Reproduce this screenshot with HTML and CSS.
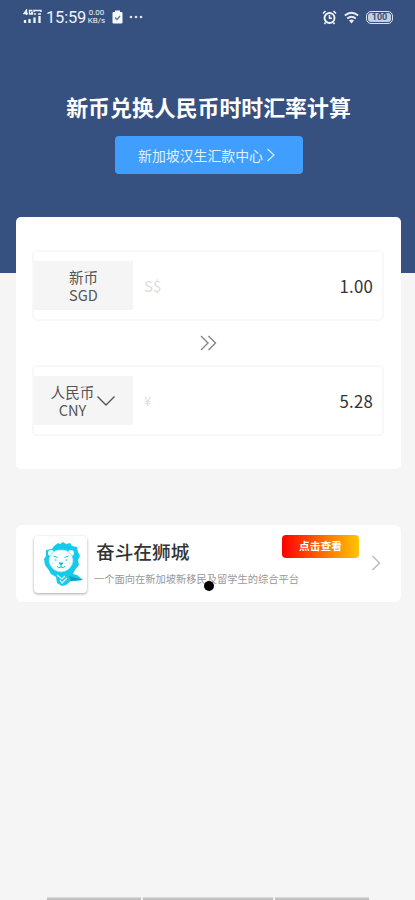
FILE: index.html
```html
<!DOCTYPE html>
<html lang="zh-CN">
<head>
<meta charset="utf-8">
<meta name="viewport" content="width=device-width">
<title>汇率计算</title>
<link rel="stylesheet" href="styles.css">
</head>
<body>
<header class="hero">
  <div class="status">
    <svg class="signal" width="19" height="16" viewBox="0 0 19 16" fill="none" stroke="#eef3fa">
      <path stroke-width="1.3" d="M3.500 6V1L1 4.500h4M9.500 1.500H6.500v3.500h3V3.500H8"/>
      <path stroke-width="1.400" d="M11 3V1.500h7V3M11 5h2M15 5h3"/>
      <path stroke-width="2.300" d="M2 14v-3M6.500 14v-4M11.500 14V8.500M16.500 14V7"/>
    </svg>
    <span class="clock">15:59</span>
    <span class="speed"><span>0.00</span><span>KB/s</span></span>
    <svg class="clip" width="11" height="14" viewBox="0 0 11 14">
      <path fill="#f5f8fc" d="M1.500 2H3V.5h5V2h1.500q1 0 1 1v9.500q0 1-1 1h-8q-1 0-1-1V3q0-1 1-1z"/>
      <path d="M3 7.500l2 2 3-3.500" fill="none" stroke="#5774a3" stroke-width="1.300"/>
    </svg>
    <svg class="dots" width="14" height="4" viewBox="0 0 14 4" fill="#dfe7f3"><circle cx="2" cy="2" r="1.300"/><circle cx="7" cy="2" r="1.300"/><circle cx="12" cy="2" r="1.300"/></svg>
    <svg class="alarm" width="15" height="15" viewBox="0 0 15 15" fill="none" stroke="#f2f6fb" stroke-width="1.900">
      <circle cx="7.500" cy="8" r="5"/><path d="M1 3.500L3.500 1M14 3.500L11.500 1M7.500 5v3.300h2.500M3.500 12.500L2.500 14M11.500 12.500l1 1.500" stroke-width="1.500"/>
    </svg>
    <svg class="wifi" width="15" height="13" viewBox="0 0 15 13" fill="none" stroke="#e8eef7" stroke-width="1.800">
      <path d="M.8 4.500Q7.500-1 14.200 4.500M3.200 7.500Q7.500 4 11.800 7.500"/><path d="M5 9.500q2.500-2 5 0L7.500 12.500z" fill="#e8eef7" stroke="none"/>
    </svg>
    <span class="battery"><span>100</span></span>
  </div>
  <h1>新币兑换人民币时时汇率计算</h1>
  <a class="center-link">新加坡汉生汇款中心<svg width="9" height="14" viewBox="0 0 9 14" fill="none" stroke="#d5eaff" stroke-width="1.200"><path d="M1.500 1L8 7l-6.500 6"/></svg></a>
</header>
<main>
  <section class="converter">
    <div class="row">
      <div class="currency"><div class="names"><span>新币</span><span>SGD</span></div></div>
      <span class="symbol">S$</span>
      <span class="amount">1.00</span>
    </div>
    <div class="arrows"><svg width="17" height="16" viewBox="0 0 17 16" fill="none" stroke="#858585" stroke-width="1.400"><path d="M1 1l7 7-7 7M8.500 1l7 7-7 7"/></svg></div>
    <div class="row">
      <div class="currency"><div class="names"><span>人民币</span><span>CNY</span></div><svg width="20" height="12" viewBox="0 0 20 12" fill="none" stroke="#555" stroke-width="1.400"><path d="M1.500 1.500L10 10l8.500-8.500"/></svg></div>
      <span class="symbol yen">¥</span>
      <span class="amount">5.28</span>
    </div>
  </section>
  <section class="promo">
    <div class="logo">
      <svg width="42" height="46" viewBox="0 0 42 46">
        <path fill="#16cbea" d="M11 4l4-3 2 1 3-2 3 2 4-1 2 3 5 1 1 5 2 4-2 4 1 5-4 5-2 4 4 1 6 5-12 1-5 4-4 1-5-3-1-6-5-3-3-5-3-4-1-6 2-3 0-6 6-1z"/>
        <circle cx="8" cy="11" r="3" fill="#f5ffff"/><circle cx="28" cy="11" r="3" fill="#f5ffff"/>
        <path fill="#f8ffff" stroke="#5fd9ec" stroke-width=".6" d="M9 11q4-4 9-3 5-1 9 3 5 6 2 12-4 7-11 7-7 0-11-7-3-6 2-12z"/>
        <g fill="none" stroke="#16bedd"><path d="M10.500 14l4 1.500M25.500 14l-4 1.500M11.500 18h2M22.500 18h2M18 22v3M14 24q1 3 4 1 3 2 4-1"/><path d="M16 21h4l-2 2z" fill="#16bedd"/><path d="M9 21h1M26 21h1" stroke="#90e4f1"/></g>
        <path d="M14 33l5 4 3-3M17 38l2 3 5-5" fill="none" stroke="#dcfaff" stroke-width="1.200"/>
        <path d="M26 34l7 2 7 2-12 1z" fill="#139bc1"/>
      </svg>
    </div>
    <div class="copy"><h2>奋斗在狮城</h2><p>一个面向在新加坡新移民及留学生的综合平台</p></div>
    <span class="badge">点击查看</span>
    <svg class="next" width="10" height="16" viewBox="0 0 10 16" fill="none" stroke="#bdbdbd" stroke-width="1.500"><path d="M1.500 1l7 7-7 7"/></svg>
    <span class="pointer"></span>
  </section>
</main>
<footer class="tabs"><span></span><span></span><span></span></footer>
</body>
</html>
```

FILE: styles.css
```css
* { box-sizing: border-box; }
body {
  margin: 0;
  height: 900px;
  overflow: hidden;
  display: flex;
  flex-direction: column;
  background: #f5f5f5;
  font-family: "Noto Sans CJK SC", sans-serif;
}
svg { flex: none; display: block; }
.hero {
  height: 273px;
  flex: none;
  background: #36517f;
  display: flex;
  flex-direction: column;
  align-items: center;
}
.status {
  width: 100%;
  height: 34px;
  padding: 0 22px 0 23px;
  display: flex;
  align-items: center;
  color: #eef3fa;
  font-family: Roboto, sans-serif;
}
.clock { width: 41px; margin: 1px 0 0 4px; font-size: 16.500px; line-height: 20px; white-space: nowrap; letter-spacing: -.2px; }
.speed { width: 19px; display: flex; flex-direction: column; align-items: center; font-size: 8px; line-height: 8px; }
.clip { margin-left: 6px; }
.dots { margin-left: 6px; }
.alarm { margin-left: auto; }
.wifi { margin-left: 7px; }
.battery {
  width: 27px;
  height: 13px;
  margin-left: 7px;
  padding: 1px;
  border: 1.5px solid #d9e2ef;
  border-radius: 5px;
  display: flex;
}
.battery span { flex: 1; border-radius: 3px; background: #c3cfe0; color: #36517f; font-size: 9px; line-height: 9px; font-weight: 700; text-align: center; }
h1 { margin: 57px 0 0 2px; font-size: 21.900px; line-height: 32px; font-weight: 700; color: #fff; white-space: nowrap; }
.center-link {
  width: 188px;
  height: 38px;
  margin: 13px 0 0 2px;
  padding-right: 4px;
  border-radius: 4px;
  background: #409eff;
  display: flex;
  align-items: center;
  justify-content: center;
  gap: 3px;
  color: #e0f0ff;
  font-size: 13.900px;
}
main { padding: 0 14px 0 16px; margin-top: -56px; }
.converter {
  position: relative;
  height: 252px;
  padding: 33px 17px 0 16px;
  border-radius: 5px;
  background: #fff;
}
.converter::before {
  content: "";
  position: absolute;
  z-index: -1;
  inset: 0 0 auto;
  height: 54px;
  border-radius: 5px 5px 0 0;
  box-shadow: 0 0 2px #0a2d62;
}
.row {
  height: 71px;
  display: flex;
  align-items: center;
  padding-right: 9px;
  border: 2px solid #f8f8f8;
  border-radius: 5px;
}
.currency {
  width: 99px;
  height: 49px;
  background: #f5f5f5;
  display: flex;
  align-items: center;
  justify-content: center;
  gap: 2px;
  color: #555;
  font-size: 14.600px;
  text-align: center;
}
.names { display: grid; row-gap: 4px; }
.names span { line-height: 14px; }
.symbol { margin-left: 11px; color: #ddd; font-size: 15px; }
.yen { font-size: 13px; }
.amount { margin-left: auto; color: #333; font-size: 16.800px; letter-spacing: .2px; }
.arrows { height: 44px; display: flex; align-items: center; justify-content: center; }
.promo {
  position: relative;
  height: 77px;
  margin-top: 56px;
  padding: 11px 20px 0 18px;
  border-radius: 6px;
  background: #fff;
  display: flex;
  align-items: flex-start;
}
.logo {
  width: 53px;
  height: 57px;
  flex: none;
  padding: 6px 0 0 9px;
  border-radius: 4px;
  background: #fff;
  box-shadow: 0 1px 3px rgba(0, 0, 0, .35);
}
.copy { width: 192px; margin-left: 8px; }
h2 { margin: 1px 0 0; padding-left: 1px; color: #333; font-size: 18.700px; line-height: 28px; font-weight: 500; white-space: nowrap; }
.copy p { margin: 6px 0 0 -1px; color: #999; font-size: 10.250px; line-height: 16px; white-space: nowrap; }
.badge {
  width: 77px;
  height: 23px;
  margin: -1px 0 0 -5px;
  flex: none;
  border-radius: 4px;
  background: linear-gradient(90deg, #f00, #ff7000 55%, #ffc400);
  color: #fff;
  font-size: 10.700px;
  line-height: 22px;
  font-weight: 700;
  text-align: center;
}
.next { margin: 19px 0 0 auto; }
.pointer { position: absolute; left: 188px; top: 56px; width: 10px; height: 10px; border-radius: 50%; background: #000; }
.tabs { margin-top: auto; padding: 0 46px 0 47px; display: grid; grid-template-columns: 94px 130px 94px; gap: 2px; }
.tabs span { height: 3px; background: linear-gradient(#ddd, #b3b3b3); }
```
